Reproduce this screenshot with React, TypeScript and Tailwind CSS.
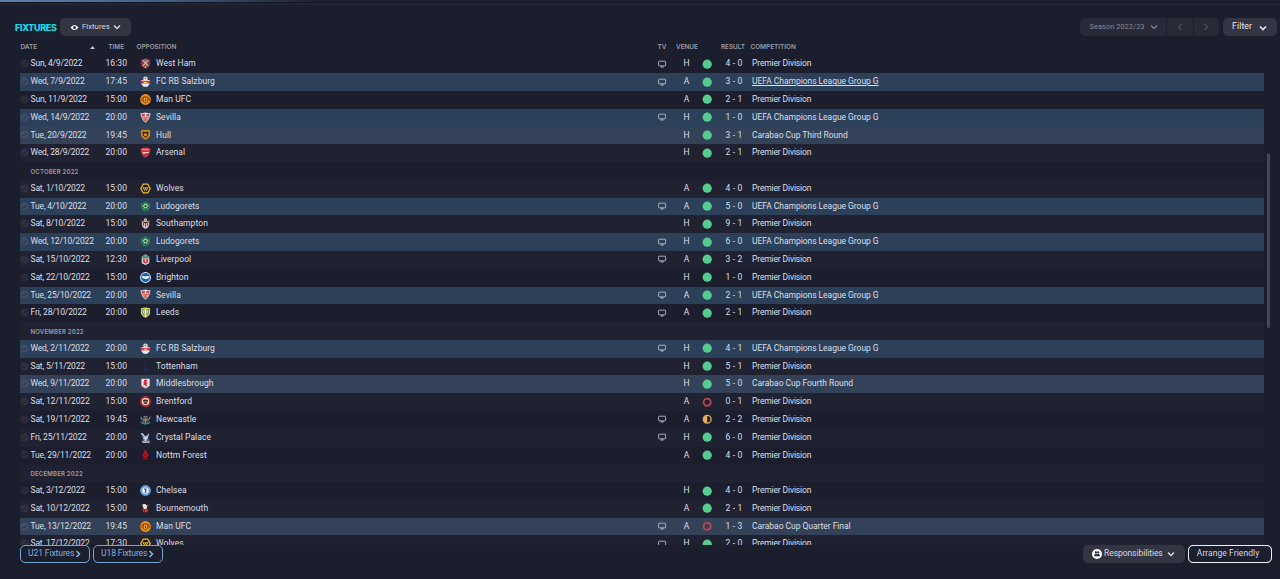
import React from "react";

type Outcome = "W" | "D" | "L";
type Crest =
  | "westham" | "salzburg" | "manutd" | "sevilla" | "hull" | "arsenal" | "wolves" | "ludogorets"
  | "southampton" | "liverpool" | "brighton" | "leeds" | "tottenham" | "middlesbrough" | "brentford"
  | "newcastle" | "palace" | "forest" | "chelsea" | "bournemouth";

type Fixture = {
  date: string; time: string; crest: Crest; team: string; tv: boolean;
  venue: "H" | "A"; outcome: Outcome; result: string; comp: string; hovered?: boolean;
};
type Item = Fixture | { month: string };

const PL = "Premier Division";
const CL = "UEFA Champions League Group G";

const f = (
  date: string, time: string, crest: Crest, team: string, tv: boolean,
  venue: "H" | "A", outcome: Outcome, result: string, comp: string, hovered = false,
): Fixture => ({ date, time, crest, team, tv, venue, outcome, result, comp, hovered });

const items: Item[] = [
  f("Sun, 4/9/2022", "16:30", "westham", "West Ham", true, "H", "W", "4 - 0", PL),
  f("Wed, 7/9/2022", "17:45", "salzburg", "FC RB Salzburg", true, "A", "W", "3 - 0", CL, true),
  f("Sun, 11/9/2022", "15:00", "manutd", "Man UFC", false, "A", "W", "2 - 1", PL),
  f("Wed, 14/9/2022", "20:00", "sevilla", "Sevilla", true, "H", "W", "1 - 0", CL),
  f("Tue, 20/9/2022", "19:45", "hull", "Hull", false, "H", "W", "3 - 1", "Carabao Cup Third Round"),
  f("Wed, 28/9/2022", "20:00", "arsenal", "Arsenal", false, "H", "W", "2 - 1", PL),
  { month: "OCTOBER 2022" },
  f("Sat, 1/10/2022", "15:00", "wolves", "Wolves", false, "A", "W", "4 - 0", PL),
  f("Tue, 4/10/2022", "20:00", "ludogorets", "Ludogorets", true, "A", "W", "5 - 0", CL),
  f("Sat, 8/10/2022", "15:00", "southampton", "Southampton", false, "H", "W", "9 - 1", PL),
  f("Wed, 12/10/2022", "20:00", "ludogorets", "Ludogorets", true, "H", "W", "6 - 0", CL),
  f("Sat, 15/10/2022", "12:30", "liverpool", "Liverpool", true, "A", "W", "3 - 2", PL),
  f("Sat, 22/10/2022", "15:00", "brighton", "Brighton", false, "H", "W", "1 - 0", PL),
  f("Tue, 25/10/2022", "20:00", "sevilla", "Sevilla", true, "A", "W", "2 - 1", CL),
  f("Fri, 28/10/2022", "20:00", "leeds", "Leeds", true, "A", "W", "2 - 1", PL),
  { month: "NOVEMBER 2022" },
  f("Wed, 2/11/2022", "20:00", "salzburg", "FC RB Salzburg", true, "H", "W", "4 - 1", CL),
  f("Sat, 5/11/2022", "15:00", "tottenham", "Tottenham", false, "H", "W", "5 - 1", PL),
  f("Wed, 9/11/2022", "20:00", "middlesbrough", "Middlesbrough", false, "H", "W", "5 - 0", "Carabao Cup Fourth Round"),
  f("Sat, 12/11/2022", "15:00", "brentford", "Brentford", false, "A", "L", "0 - 1", PL),
  f("Sat, 19/11/2022", "19:45", "newcastle", "Newcastle", true, "A", "D", "2 - 2", PL),
  f("Fri, 25/11/2022", "20:00", "palace", "Crystal Palace", true, "H", "W", "6 - 0", PL),
  f("Tue, 29/11/2022", "20:00", "forest", "Nottm Forest", false, "A", "W", "4 - 0", PL),
  { month: "DECEMBER 2022" },
  f("Sat, 3/12/2022", "15:00", "chelsea", "Chelsea", false, "H", "W", "4 - 0", PL),
  f("Sat, 10/12/2022", "15:00", "bournemouth", "Bournemouth", false, "A", "W", "2 - 1", PL),
  f("Tue, 13/12/2022", "19:45", "manutd", "Man UFC", true, "A", "L", "1 - 3", "Carabao Cup Quarter Final"),
  f("Sat, 17/12/2022", "17:30", "wolves", "Wolves", true, "H", "W", "2 - 0", PL),
];

const crests: Record<Crest, React.ReactNode> = {
  westham: (<>
    <path d="M1 1.500 6 .5l5 1v5C11 9 8.500 11 6 11.800 3.500 11 1 9 1 6.500Z" fill="#8d3540" />
    <path d="m3 2.500 6 6M9 2.500l-6 6" stroke="#d9c9b4" strokeWidth="1.200" />
    <path d="M4.300 1.500h3.400L6 4Z" fill="#6a9fc0" /><path d="m6 8 1.500 2L6 11l-1.500-1Z" fill="#d6a05c" />
  </>),
  salzburg: (<>
    <circle cx="6" cy="3" r="2.500" fill="#e8dfe4" /><path d="M.2 5h11.600L10 8.500H2Z" fill="#d8304a" />
    <path d="M1.500 4.500h9v1h-9Z" fill="#f4d6d4" /><path d="M4 6.300h4v1.700H4Z" fill="#f1c74c" />
    <path d="M1 8.300h10L8 11.600H4Z" fill="#e9edf4" /><path d="M5.200 1.800h1.600v1.500H5.200Z" fill="#c64a5a" />
  </>),
  manutd: (<>
    <circle cx="6" cy="6" r="5.900" fill="#e8951c" /><path d="M2.500 3.500Q6 1.500 9.500 3.500v3Q9 9.500 6 10.500 3 9.500 2.500 6.500Z" fill="#a53a16" />
    <path d="M4.200 4h3.600v3.800L6 9.500 4.200 7.800Z" fill="#f2b52c" /><path d="M5.300 5h1.400v3H5.300Z" fill="#9a3010" />
    <path d="M1.300 4v4M10.700 4v4" stroke="#6e2c12" strokeWidth=".7" />
  </>),
  sevilla: (<>
    <path d="M.5 1.200Q3 2 6 .6q3 1.400 5.500.6Q11 8 6 11.800 1 8 .5 1.200Z" fill="#e4d6d2" />
    <path d="M2.200 5.500h7.600Q8.800 9 6 11 3.200 9 2.200 5.500Z" fill="#dd5b58" /><path d="M1.600 2.200h3.800V5H2ZM7 2.200h3.300L10 5H7Z" fill="#cf4a4d" />
    <path d="M6 2v3.500M4.300 6v2.500M7.700 6v2.500" stroke="#f5e9e4" strokeWidth=".7" />
  </>),
  hull: (<>
    <path d="M1 2 3 .7l3 .5 3-.5L11 2v5Q9.500 10.500 6 11.800 2.500 10.500 1 7Z" fill="#d88a1c" />
    <path d="m2.600 3.500 1.400-1 2 1 2-1 1.400 1L9 7 6 10 3 7Z" fill="#3c2a12" />
    <path d="M4 4.700 6 5.500l2-.8L7.200 7.500 6 8.500l-1.200-1Z" fill="#e79a26" />
  </>),
  arsenal: (<>
    <path d="M.8 1.500Q6-.2 11.200 1.500q.4 7.500-5.200 10.300Q.4 9 .8 1.500Z" fill="#d93342" />
    <path d="M2.500 2.800h7" stroke="#f0b9b7" strokeWidth="1" /><path d="M2.500 5.500h7v1.100H5.700l-.7.800H3.400Z" fill="#efd5b3" />
    <path d="M1.300 7.500Q2.800 10.500 6 11.800l-.2-1.300Q3 9.500 1.300 7.500Z" fill="#315287" />
  </>),
  wolves: (<>
    <path d="M3.200.5h5.600L11.900 6l-3.100 5.500H3.200L.1 6Z" fill="#f5be22" /><path d="M3.900 1.800h4.200L10.400 6l-2.300 4.200H3.900L1.600 6Z" fill="#18160f" />
    <path d="m2.800 3.800 2 1L6 4.500l1.200.3 2-1L8.500 6.800 7.400 7.400 6.900 9H5.100l-.5-1.600L3.500 6.800Z" fill="#f5be22" /><path d="m4.200 5.700 1.200.8M7.800 5.700l-1.200.8M6 7v2" stroke="#18160f" strokeWidth=".9" />
  </>),
  ludogorets: (<>
    <path d="M6 .5 11 3v4q-1 3.200-5 4.700Q2 10.200 1 7V3Z" fill="#2e8452" /><circle cx="6" cy="5.600" r="2.700" fill="#b5dcc2" />
    <path d="m6 4 1.500 1.100-.6 1.800H5.100l-.6-1.800Z" fill="#23503c" /><path d="m3 3 1.500.8M9 3l-1.500.8M6 8v2.500M2.200 7.500l1.800-.7M9.800 7.500 8 6.800" stroke="#134d31" strokeWidth="1" />
  </>),
  southampton: (<>
    <path d="M2 3.500h8V7Q9.500 10.500 6 11.800 2.500 10.500 2 7Z" fill="#d9d1cc" /><circle cx="6" cy="2.200" r="1.800" fill="#e9e4df" />
    <path d="M3 4.500h1.500V9L3 8ZM7.500 4.500H9V8l-1.500 1ZM5.500 5.500h1V10h-1Z" fill="#c92a3a" />
    <path d="M.8 2.300 3.500 4M11.200 2.300 8.500 4" stroke="#a54444" strokeWidth="1" /><path d="M4 4.300h4v1.200H4Z" fill="#29221f" />
    <path d="M5 1.500h2v1.300H5Z" fill="#594840" />
  </>),
  liverpool: (<>
    <path d="M2 3 6 .3 10 3v7L6 11.900 2 10Z" fill="#e8dedb" /><path d="M1.700 3.300 6 .8l4.300 2.500v1.200H1.700Z" fill="#3d9b7f" />
    <path d="M3.300 4.800h5.400V9L6 10.600 3.300 9Z" fill="#d6404f" /><path d="M5.200 5.500 6.500 5l.3 1.500L6.300 9H5.500Z" fill="#f0c9c5" />
    <path d="M2 6v3.500M10 6v3.500" stroke="#4ba187" strokeWidth=".9" />
  </>),
  brighton: (<>
    <circle cx="6" cy="6" r="5.900" fill="#e8f2fc" /><circle cx="6" cy="6" r="4.900" fill="#1261b4" />
    <path d="M1.600 5.300Q4 3.800 6 4.900q2-1 4.500.2Q9.300 7.600 6.300 7.500 3.300 7.400 2.600 6.200Z" fill="#fff" /><path d="m4 5.900 3 .3" stroke="#8db9e0" strokeWidth=".5" />
  </>),
  leeds: (<>
    <path d="M1 1.300Q6-.3 11 1.300v5.500Q10 10.500 6 11.800 2 10.500 1 6.800Z" fill="#d5d548" />
    <path d="M2.300 2.300h7.400v4.300Q9 9.500 6 10.700 3 9.500 2.300 6.600Z" fill="#66867a" /><path d="M5 2h2v8.300L6 11l-1-.7Z" fill="#f1f0b6" />
    <path d="M3 3.200h1.500v4H3ZM7.500 3.200H9v4H7.500Z" fill="#d4d656" />
  </>),
  tottenham: (<>
    <circle cx="6.100" cy="9" r="1.500" fill="none" stroke="#26326b" strokeWidth=".9" /><path d="M6 2.300 7 4 6.300 7H5.400L5 4.500Z" fill="#232d5c" />
    <path d="m5 1.500 1.600.4" stroke="#344487" strokeWidth=".8" />
  </>),
  middlesbrough: (<>
    <path d="M1.500.8h9v7Q9.500 10.700 6 11.800 2.500 10.700 1.500 7.800Z" fill="#f0e5e6" />
    <path d="M4 2.500 6.500 1.300 8 3 6.500 4.500l2 1L7 7 8 8.800H6L5 7.300 3.500 8.500 4.300 6 3 5l1.800-.6Z" fill="#d72738" /><path d="M2 9.300 6 11l4-1.700" stroke="#ca4854" strokeWidth=".8" fill="none" />
  </>),
  brentford: (<>
    <circle cx="6" cy="6" r="5.900" fill="#d32733" /><circle cx="6" cy="6" r="3.900" fill="#ece0d1" />
    <path d="M3.300 4.700 6 3.500l2.700 1.200L7.800 8 6 9 4.200 8Z" fill="#38251f" /><path d="M4.600 5.500h2.800v.7H4.600ZM5 7h2v.7H5Z" fill="#dfa637" />
  </>),
  newcastle: (<>
    <path d="M3 3.500h6V8Q8 10 6 11 4 10 3 8Z" fill="#26333a" /><path d="M4.300 4v5M6 4v6M7.700 4v5" stroke="#a7afae" strokeWidth=".7" />
    <path d="M.8 3 2.800 7M11.200 3 9.200 7M4 2.500l2 1 2-1" stroke="#8c8b78" strokeWidth="1.100" fill="none" />
    <path d="M.2 8.300Q3 9 6 10q3-1 5.800-1.700Q10.500 11.400 6 11.700 1.500 11.400.2 8.300Z" fill="#2d8fa1" /><path d="M4 6h4v1H4Z" fill="#bd9143" />
  </>),
  palace: (<>
    <path d="M.8 1Q3.500.8 4.500 3.300L6 5l4-3.700-1 4.200L8 8.500H4L3 5.500Z" fill="#c6d4e7" /><path d="M3 7.500h6.500L11 10.500H2Z" fill="#3c6394" />
    <path d="M2.500 10.300h8v1.300h-8ZM5 7.300l1-1.500 1 1.500v2.500H5Z" fill="#d4dce8" /><path d="m7.500 3.700 2 1.500M2.500 3.200l2 3" stroke="#3d69a3" strokeWidth=".9" />
  </>),
  forest: (<>
    <path d="M6 .7 8 3l-.4 1.200L9.300 6 8.800 8.300 6.800 9v2.500H5.200V9l-2-.7L2.800 6 4.400 4.200 4 3Z" fill="#b01522" />
    <path d="M3.500 9.500h5v2h-5Z" fill="#970f1b" /><path d="M4.500 5.500h3M4.300 7.200h3.400" stroke="#6e0b16" strokeWidth=".5" />
  </>),
  chelsea: (<>
    <circle cx="6" cy="6" r="5.900" fill="#4f83c5" /><circle cx="6" cy="6" r="5" fill="none" stroke="#bfd3ea" strokeWidth=".6" />
    <circle cx="6" cy="6" r="3.600" fill="#edf1f7" /><path d="M5 3.500 7 3.700 7.300 5.500 6.500 7l.7 1.500H5L5.700 6 4.700 5Z" fill="#2d5da9" />
  </>),
  bournemouth: (<>
    <path d="M1.800.8h8.400v7.500Q9 10.700 6 11.800 3 10.700 1.800 8.300Z" fill="#2b1b21" /><path d="M2.500 1.500Q6.500.3 8 3.200L7.500 6 5 6.800 3.500 5.500Z" fill="#ece6e4" />
    <path d="M5 6.500h3.800V9L6.500 10.700 5 9.500Z" fill="#d5313d" /><path d="M3 5v4l1.300 1V6Z" fill="#d5313d" /><circle cx="8.300" cy="2.700" r="1.200" fill="#c92735" />
  </>),
};

const CrestIcon = ({ name }: { name: Crest }) => (
  <svg viewBox="0 0 12 12" className="mb-px ml-2 size-[11px]" aria-hidden="true">{crests[name]}</svg>
);

const CheckMark = () => (
  <svg viewBox="0 0 9 9" className="mb-px size-[9px]" aria-hidden="true">
    <circle cx="4.500" cy="4.500" r="4" fill="#ffffff" fillOpacity=".07" />
    <path d="m2.500 4.700 1.400 1.300 2.600-3" fill="none" stroke="#10121e" strokeOpacity=".5" strokeWidth="1" />
  </svg>
);

const TvIcon = () => (
  <svg viewBox="0 0 9 8" className="mb-px h-2 w-[9px]" fill="none" stroke="#b4b9c4" aria-hidden="true">
    <rect x=".6" y="1.200" width="7" height="4.600" rx=".5" strokeWidth=".9" />
    <path d="M2.600 6.900h3" strokeWidth="1.200" />
  </svg>
);

const OutcomeDot = ({ outcome }: { outcome: Outcome }) => (
  <svg viewBox="0 0 10 10" className="mb-px size-[10px]" aria-hidden="true">
    {outcome === "W" && <circle cx="5.200" cy="5.200" r="4.600" fill="#56cb90" />}
    {outcome === "L" && <circle cx="5.200" cy="5.200" r="3.600" fill="none" stroke="#b9434f" strokeWidth="1.800" />}
    {outcome === "D" && (<><circle cx="5.200" cy="5.200" r="3.900" fill="#1d1f2d" stroke="#e2b25a" strokeWidth="1.300" /><path d="M5.200 1.300a3.900 3.900 0 0 0 0 7.800Z" fill="#e2b25a" /></>)}
  </svg>
);

const Chevron = ({ dir, className }: { dir: "down" | "left" | "right"; className: string }) => (
  <svg viewBox="0 0 8 8" className={className} fill="none" stroke="currentColor" aria-hidden="true">
    <path d={dir === "down" ? "m1 2.500 3 3 3-3" : dir === "left" ? "M5.500 1 2.500 4l3 3" : "m2.500 1 3 3-3 3"} />
  </svg>
);

const columns = "grid grid-cols-[10.5px_70px_31.5px_24px_492px_28px_21px_20px_32px_1fr] items-center";

const rowColor = (item: Item, index: number) => {
  if ("comp" in item && item.comp === CL) return "bg-[#2d405a]";
  if ("comp" in item && item.comp.startsWith("Carabao")) return "bg-[#334259]";
  return index % 2 ? "bg-[#212231]" : "bg-[#1c1e2d]";
};

const FixtureRow = ({ item, index }: { item: Item; index: number }) =>
  "month" in item ? (
    <div className={`flex h-[17.785px] items-center pt-px pl-[10.5px] font-['Inter','Liberation_Sans',sans-serif] text-[6px] font-semibold tracking-[0.2px] text-[#9a9ca8] ${rowColor(item, index)}`}>
      {item.month}
    </div>
  ) : (
    <div className={`h-[17.785px] whitespace-nowrap ${columns} ${rowColor(item, index)}`}>
      <CheckMark />
      <span className="tracking-[-0.16px]">{item.date}</span>
      <span className="text-center tracking-[0.1px]">{item.time}</span>
      <CrestIcon name={item.crest} />
      <span className="tracking-[0.07px]">{item.team}</span>
      <span className="flex justify-center">{item.tv && <TvIcon />}</span>
      <span className="text-center">{item.venue}</span>
      <span className="flex justify-center"><OutcomeDot outcome={item.outcome} /></span>
      <span className="pl-0.5 text-center tracking-[0.2px]">{item.result}</span>
      <span className={`pl-[3px] ${item.comp === PL ? "tracking-[-0.14px]" : "tracking-[-0.04px]"} ${item.hovered ? "underline underline-offset-1" : ""}`}>{item.comp}</span>
    </div>
  );

export default function App() {
  return (
    <div className="flex h-[579px] w-[1280px] flex-col overflow-hidden bg-[#1b1e2c] font-['Roboto','Liberation_Sans',sans-serif] text-[#dcdfe6]">
      <div className="h-[2px] shrink-0 bg-linear-to-r from-[#5f82ad] via-[#3f5a7d] via-14% to-[#1e2030] to-25%" />
      <div className="h-px shrink-0 bg-[#131522]" />
      <div className="h-[2px] shrink-0 bg-[#222534]" />

      <header className="flex h-[35px] shrink-0 items-start pr-[3px] pl-[15px] pt-3">
        <h1 className="mt-[5px] w-[45px] font-['Inter','Liberation_Sans',sans-serif] text-[9px] leading-3 font-extrabold tracking-[-0.35px] text-[#12dfe8]">FIXTURES</h1>
        <button className="mt-px flex h-[18px] w-[71px] items-center rounded-[5px] bg-[#333543] pl-[10px] text-[7.8px] text-[#d3d6de]">
          <svg viewBox="0 0 9 7" className="mr-[3px] h-[7px] w-[9px]" aria-hidden="true">
            <path fillRule="evenodd" d="M.5 3.500Q4.500-1.500 8.500 3.500 4.500 8.500.5 3.500Zm4-1.500a1.500 1.500 0 1 0 0 3 1.500 1.500 0 0 0 0-3Z" fill="#fff" />
          </svg>
          Fixtures
          <Chevron dir="down" className="ml-[3.5px] size-2 stroke-[1.5]" />
        </button>
        <div className="ml-auto mt-px flex h-[18px] text-[7.4px] tracking-[0.06px] text-[#858793]">
          <button className="flex w-[86px] items-center justify-between rounded-l-[5px] bg-[#282a38] pr-[8px] pl-[10px]">
            Season 2022/23
            <Chevron dir="down" className="size-2 stroke-[1.2]" />
          </button>
          <button className="ml-px flex w-[26px] items-center justify-center bg-[#282a38] text-[#666876]"><Chevron dir="left" className="size-2" /></button>
          <button className="ml-px flex w-[25.500px] items-center justify-center rounded-r-[5px] bg-[#282a38] text-[#666876]"><Chevron dir="right" className="size-2" /></button>
        </div>
        <button className="ml-1 mt-px flex h-[18px] w-[54px] items-center justify-between rounded-[5px] bg-[#333543] pr-[10px] pb-px pl-[9px] text-[8.7px] tracking-[0.12px] text-[#e8eaf0]">
          Filter
          <Chevron dir="down" className="mt-0.5 size-2 stroke-[1.600]" />
        </button>
      </header>

      <div className="flex h-[505px] shrink-0 pl-5">
        <div className="w-[1244px]">
          <div className={`h-[15.4px] font-['Inter','Liberation_Sans',sans-serif] text-[6.4px] font-semibold whitespace-nowrap text-[#9a9ca8] ${columns}`}>
            <span className="col-span-2 flex items-center justify-between pr-[5.5px] pl-[0.5px]">
              DATE
              <svg viewBox="0 0 5 3" className="h-[3px] w-[5px]" aria-hidden="true"><path d="M0 3 2.500 0 5 3Z" fill="#c4c6ce" /></svg>
            </span>
            <span className="text-center">TIME</span>
            <span className="col-span-2 pl-[4.500px]">OPPOSITION</span>
            <span className="text-center">TV</span>
            <span className="text-center">VENUE</span>
            <span />
            <span className="text-center">RESULT</span>
            <span className="pl-[1.500px]">COMPETITION</span>
          </div>
          <div className="h-[489.6px] overflow-hidden text-[8.500px] leading-[17.78px]">
            {items.map((item, i) => <FixtureRow key={i} item={item} index={i} />)}
          </div>
        </div>
        <div className="mt-[113px] ml-[3px] h-[175px] w-[3px] rounded-full bg-[#44465a]" />
      </div>

      <footer className="flex h-[18px] shrink-0 pr-2 pl-5 text-[8.500px]">
        <button className="flex w-[70px] items-center rounded-[5px] border-[1.500px] border-[#77a5d3] pb-px pl-[7px] tracking-[-0.08px] text-[#86aedb]">
          U21 Fixtures <Chevron dir="right" className="mt-px size-2 stroke-[1.600]" />
        </button>
        <button className="ml-[3px] flex w-[70px] items-center rounded-[5px] border-[1.500px] border-[#77a5d3] pb-px pl-[7px] tracking-[-0.08px] text-[#86aedb]">
          U18 Fixtures <Chevron dir="right" className="mt-px size-2 stroke-[1.600]" />
        </button>
        <button className="ml-auto flex w-[102px] items-center rounded-[5px] bg-[#333543] pb-px pl-[9px] tracking-[-0.06px] text-[#d5d8e0]">
          <svg viewBox="0 0 10 10" className="mt-px mr-[2.5px] size-[10px]" aria-hidden="true">
            <circle cx="5" cy="5" r="5" fill="#fff" />
            <circle cx="3.900" cy="3.400" r="1.100" fill="#252735" /><circle cx="6.200" cy="3.400" r="1.100" fill="#252735" />
            <path d="M2 7.300Q2.300 4.800 3.800 4.800q1.200 0 1.300 1 .1-1 1.300-1Q7.700 4.800 8 7.300Z" fill="#252735" />
          </svg>
          Responsibilities
          <Chevron dir="down" className="mt-px ml-1 size-2 stroke-[1.500]" />
        </button>
        <button className="ml-[3.500px] flex w-[84px] items-center justify-center rounded-[5px] border-[1.500px] border-[#eceef3] pr-1 pb-px tracking-[0.06px] text-[#d5d8e0] outline-[0.5px] -outline-offset-1 outline-[#eceef3]/60">
          Arrange Friendly
        </button>
      </footer>
    </div>
  );
}
